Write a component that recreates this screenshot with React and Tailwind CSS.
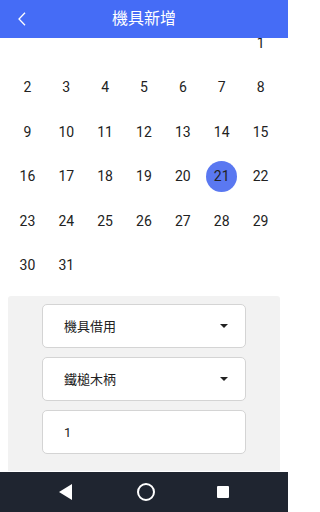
import React from 'react';

const days = [
  ...Array(6).fill(null),
  ...Array.from({ length: 31 }, (_, i) => i + 1),
];

const SELECTED = 21;

const Caret = () => (
  <svg width="8" height="4" viewBox="0 0 8 4">
    <path d="M0 0 L8 0 L4 4 Z" fill="#222" />
  </svg>
);

const SelectBox = ({ label }) => (
  <div className="w-[204px] h-[44px] bg-white border border-[#d4d4d4] rounded-[5px] flex items-center justify-between pl-[21px] pr-[17px] text-[13px] text-[#222]">
    <span>{label}</span>
    <Caret />
  </div>
);

export default function App() {
  const firstWeek = days.slice(0, 7);
  const rest = days.slice(7);

  return (
    <div className="w-[288px] h-[512px] flex flex-col overflow-hidden bg-white font-['Roboto','Noto_Sans_CJK_TC',sans-serif]">
      {/* header */}
      <div className="h-[38px] shrink-0 bg-[#456cf6] grid grid-cols-[1fr_auto_1fr] items-center">
        <div className="pl-[18px] flex items-center">
          <svg width="8" height="14" viewBox="0 0 8 14" fill="none">
            <path d="M7 0.8 L1 7 L7 13.2" stroke="white" strokeWidth="1.3" />
          </svg>
        </div>
        <div className="text-white text-[16px] leading-none">機具新增</div>
        <div />
      </div>

      {/* calendar (scrolled, first week partly hidden) */}
      <div className="flex-1 flex flex-col overflow-hidden">
        <div className="grid grid-cols-7 px-2 shrink-0">
          {firstWeek.map((d, i) => (
            <div key={i} className="h-[27.3px] flex justify-center text-[14px] leading-[10px] text-[#222]">
              {d}
            </div>
          ))}
          {rest.map((d, i) => (
            <div key={i} className="h-[44.6px] flex items-center justify-center text-[14px] text-[#222]">
              {d === SELECTED ? (
                <div className="w-[31px] h-[31px] rounded-full bg-[#5a78f1] flex items-center justify-center -mt-px">
                  {d}
                </div>
              ) : (
                d
              )}
            </div>
          ))}
        </div>

        <div className="flex-1 mx-2 mt-2 mb-px bg-[#f2f2f2] rounded-t-[3px] pt-2 flex flex-col items-center gap-[9px]">
          <SelectBox label="機具借用" />
          <SelectBox label="鐵槌木柄" />
          <div className="w-[204px] h-[44px] bg-white border border-[#d4d4d4] rounded-[5px] flex items-center pl-[21px] text-[13px] text-[#222]">
            1
          </div>
        </div>
      </div>

      {/* android nav */}
      <div className="h-[40px] shrink-0 bg-[#1f2530] flex items-center justify-center">
        <div className="w-[20px] flex justify-center mr-[60px]">
          <svg width="13" height="16" viewBox="0 0 13 16">
            <path d="M13 0 L13 16 L0 8 Z" fill="white" />
          </svg>
        </div>
        <div className="w-[20px] flex justify-center">
          <div className="w-[18px] h-[18px] rounded-full border-2 border-white" />
        </div>
        <div className="w-[20px] flex justify-center ml-[57px]">
          <div className="w-[12px] h-[12px] bg-white rounded-[1px]" />
        </div>
      </div>
    </div>
  );
}
